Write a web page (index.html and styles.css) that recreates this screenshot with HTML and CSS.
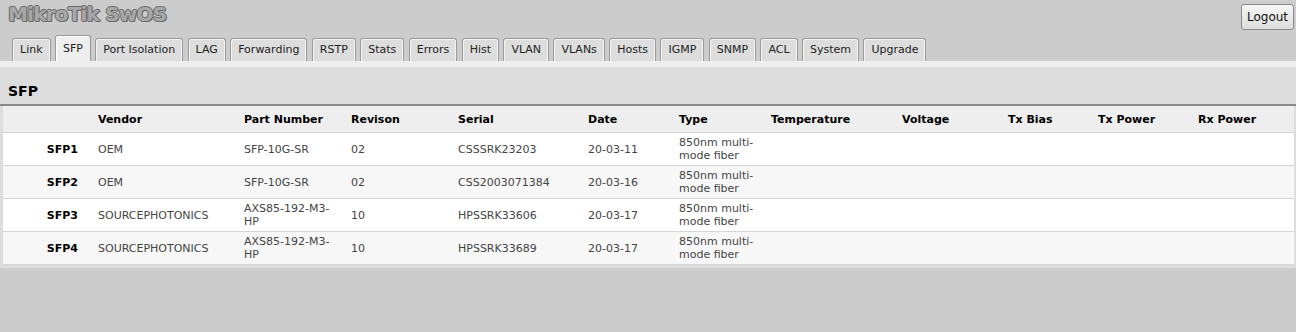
FILE: index.html
```html
<!DOCTYPE html>
<html>
<head>
    <meta charset="UTF-8">
    <title>MikroTik SwOS</title>
    <link rel="stylesheet" href="styles.css">
</head>
<body>
    <div class="top">
        <div class="title">MikroTik SwOS</div>
        <button class="logout">Logout</button>
    </div>

    <div class="tabs">
        <div class="tab">Link</div>
        <div class="tab active">SFP</div>
        <div class="tab">Port Isolation</div>
        <div class="tab">LAG</div>
        <div class="tab">Forwarding</div>
        <div class="tab">RSTP</div>
        <div class="tab">Stats</div>
        <div class="tab">Errors</div>
        <div class="tab">Hist</div>
        <div class="tab">VLAN</div>
        <div class="tab">VLANs</div>
        <div class="tab">Hosts</div>
        <div class="tab">IGMP</div>
        <div class="tab">SNMP</div>
        <div class="tab">ACL</div>
        <div class="tab">System</div>
        <div class="tab">Upgrade</div>
    </div>
    <div class="strip"></div>

    <div class="panel">
        <h2>SFP</h2>
        <table class="sfp-table">
            <colgroup>
                <col style="width: 85px">
                <col style="width: 146px">
                <col style="width: 107px">
                <col style="width: 107px">
                <col style="width: 130px">
                <col style="width: 91px">
                <col style="width: 92px">
                <col style="width: 131px">
                <col style="width: 106px">
                <col style="width: 90px">
                <col style="width: 100px">
                <col style="width: 106px">
            </colgroup>
            <thead>
                <tr>
                    <th></th>
                    <th>Vendor</th>
                    <th>Part Number</th>
                    <th>Revison</th>
                    <th>Serial</th>
                    <th>Date</th>
                    <th>Type</th>
                    <th>Temperature</th>
                    <th>Voltage</th>
                    <th>Tx Bias</th>
                    <th>Tx Power</th>
                    <th>Rx Power</th>
                </tr>
            </thead>
            <tbody>
                <tr>
                    <td class="port">SFP1</td>
                    <td>OEM</td>
                    <td>SFP-10G-SR</td>
                    <td>02</td>
                    <td>CSSSRK23203</td>
                    <td>20-03-11</td>
                    <td class="type">850nm multi-mode fiber</td>
                    <td></td><td></td><td></td><td></td><td></td>
                </tr>
                <tr>
                    <td class="port">SFP2</td>
                    <td>OEM</td>
                    <td>SFP-10G-SR</td>
                    <td>02</td>
                    <td>CSS2003071384</td>
                    <td>20-03-16</td>
                    <td class="type">850nm multi-mode fiber</td>
                    <td></td><td></td><td></td><td></td><td></td>
                </tr>
                <tr>
                    <td class="port">SFP3</td>
                    <td>SOURCEPHOTONICS</td>
                    <td>AXS85-192-M3-HP</td>
                    <td>10</td>
                    <td>HPSSRK33606</td>
                    <td>20-03-17</td>
                    <td class="type">850nm multi-mode fiber</td>
                    <td></td><td></td><td></td><td></td><td></td>
                </tr>
                <tr>
                    <td class="port">SFP4</td>
                    <td>SOURCEPHOTONICS</td>
                    <td>AXS85-192-M3-HP</td>
                    <td>10</td>
                    <td>HPSSRK33689</td>
                    <td>20-03-17</td>
                    <td class="type">850nm multi-mode fiber</td>
                    <td></td><td></td><td></td><td></td><td></td>
                </tr>
            </tbody>
        </table>
    </div>
</body>
</html>
```

FILE: styles.css
```css
body {
    margin: 0;
    background: #cccccc;
    font-family: "DejaVu Sans", Verdana, sans-serif;
    font-size: 11px;
    color: #333;
}

.top {
    display: flex;
    justify-content: space-between;
    align-items: flex-start;
    height: 35px;
    padding: 0 2px 0 8px;
}

.title {
    margin-top: 2px;
    font-size: 20px;
    font-weight: bold;
    letter-spacing: -0.8px;
    color: #a8a8a8;
    text-shadow: 1px 0 0 #6a6a6a, -1px 0 0 #6a6a6a, 0 1px 0 #6a6a6a, 0 -1px 0 #6a6a6a, 1px 1px 0 #6a6a6a;
}

.logout {
    margin-top: 4px;
    width: 53px;
    height: 26px;
    padding: 0;
    font-family: "DejaVu Sans", Verdana, sans-serif;
    font-size: 12px;
    color: #111;
    background: linear-gradient(#f6f6f6, #dddddd);
    border: 1px solid #8a8a8a;
    border-radius: 3px;
}

.tabs {
    display: flex;
    align-items: flex-end;
    gap: 4.4px;
    padding-left: 12px;
    height: 26px;
}

.tab {
    height: 22px;
    line-height: 21px;
    padding: 0 7px;
    background: #dddddd;
    border: 1px solid #9a9a9a;
    border-bottom: none;
    border-radius: 3px 3px 0 0;
    box-shadow: inset 1px 1px 0 #f4f4f4, inset -1px 0 0 #f4f4f4;
    color: #222;
}

.tab.active {
    height: 25px;
    line-height: 26px;
    background: #eeeeee;
    box-shadow: inset 1px 1px 0 #ffffff;
}

.strip {
    height: 6px;
    background: #eeeeee;
}

.panel {
    background: #dddddd;
    padding: 0 2px 3px 3px;
}

h2 {
    margin: 0 -2px 0 -3px;
    padding: 16px 0 5px 8px;
    font-size: 14px;
    font-weight: bold;
    color: #000;
    border-bottom: 2px solid #8a8a8a;
}

.sfp-table {
    width: 1291px;
    table-layout: fixed;
    border-collapse: collapse;
}

.sfp-table th {
    height: 26px;
    padding: 0 10px;
    text-align: left;
    font-weight: bold;
    color: #000;
    background: #eeeeee;
    border-bottom: 1px solid #d6d6d6;
}

.sfp-table td {
    height: 32px;
    padding: 0 10px;
    line-height: 13px;
    color: #444;
    border-bottom: 1px solid #d6d6d6;
}

.sfp-table td.type {
    padding-right: 0;
}

.sfp-table tbody tr:nth-child(odd) td {
    background: #ffffff;
}

.sfp-table tbody tr:nth-child(even) td {
    background: #f7f7f7;
}

.sfp-table td.port {
    text-align: right;
    font-weight: bold;
    color: #000;
}
```
